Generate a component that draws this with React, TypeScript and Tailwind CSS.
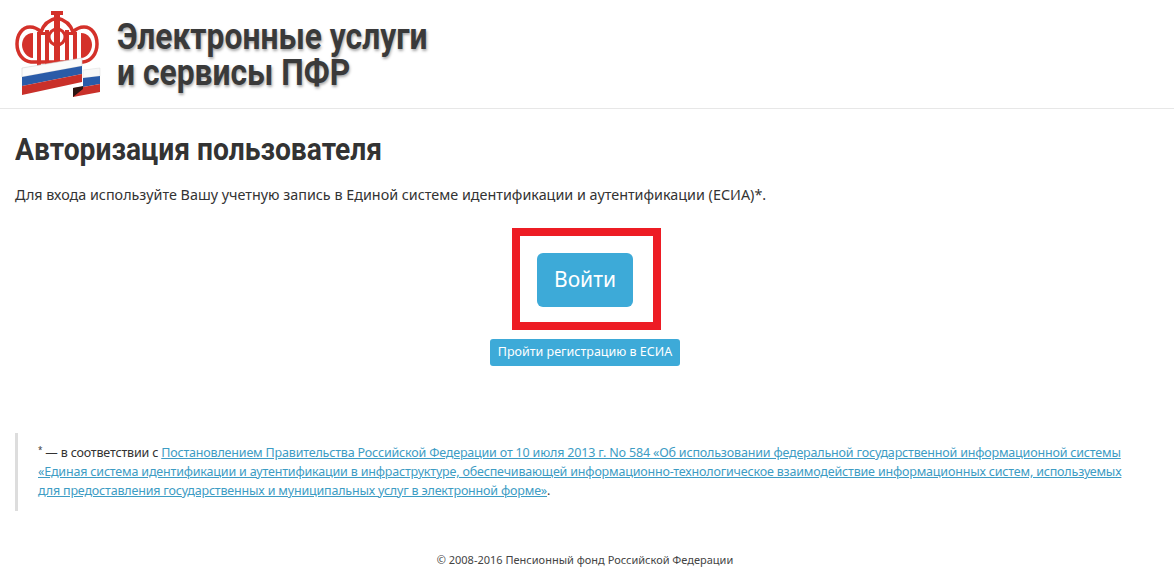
const Logo = () => (
  <svg width="86" height="88" viewBox="0 0 86 88" className="shrink-0">
    {/* dome */}
    <path
      d="M42 8C33 10 28 16 26 22 23 19 19 17 15 17 7 17 2 25 2 34 2 44 8 51 16 52H68C76 51 82 44 82 34 82 25 77 17 69 17 65 17 61 19 58 22 56 16 51 10 42 8Z"
      fill="#fff"
      stroke="#d4312a"
      strokeWidth="3.5"
    />
    <path d="M36 1h12v4h-3v6h-6V5h-3z" fill="#d4312a" />
    {/* lobes */}
    <path d="M18 23C11 23 7 29 7 35 7 41 12 48 18 48Z" fill="#d4312a" />
    <path d="M66 23C73 23 77 29 77 35 77 41 72 48 66 48Z" fill="#d4312a" />
    {/* letter strokes */}
    <path d="M22 22h4v38h-4zM30 20h4v38h-4zM50 20h4v36h-4zM58 22h4v34h-4zM39 11h6v45h-6z" fill="#d4312a" />
    <path d="M22 22h12v3H22zM50 22h12v3H50z" fill="#d4312a" />
    <circle cx="42" cy="27" r="8" fill="none" stroke="#d4312a" strokeWidth="3" />
    {/* small flag */}
    <path d="M68 60l17-2v8l-17 2z" fill="#f8f8f8" stroke="#ddd" strokeWidth=".5" />
    <path d="M68 68l17-2v8l-17 3z" fill="#2a5ba8" />
    <path d="M58 78l10-1 17-3v8l-27 5z" fill="#c9302a" />
    <path d="M58 78l10-2v3l-10 8z" fill="#2b1512" />
    {/* big flag */}
    <path d="M7 58l60-10v8L7 67z" fill="#fbfbfb" stroke="#d0d0d0" strokeWidth=".6" />
    <path d="M7 67l60-11v8L7 76z" fill="#2a5ba8" />
    <path d="M7 76l60-12v8L7 85z" fill="#c9302a" />
  </svg>
);

const App = () => {
  return (
    <div className="relative h-[570px] w-[1174px] overflow-hidden bg-white font-['Noto_Sans',sans-serif] text-[#333]">
      {/* header */}
      <div className="flex h-[109px] items-start gap-[16px] border-b border-[#e7e7e7] pl-[15px] pt-[10px]">
        <Logo />
        <div className="mt-[9px] font-['Roboto',sans-serif] text-[36px] font-bold leading-[36px] text-[#3a3a3a] [text-shadow:1px_2px_3px_#aaa]">
          <div className="w-[360px] origin-left scale-x-[0.883] whitespace-nowrap">Электронные услуги</div>
          <div className="w-[360px] origin-left scale-x-[0.883] whitespace-nowrap">и сервисы ПФР</div>
        </div>
      </div>

      <div className="px-[15px]">
        <h1 className="mt-[21px] origin-left scale-x-[0.91] whitespace-nowrap font-['Roboto',sans-serif] text-[31px] font-bold leading-[40px] text-[#333]">
          Авторизация пользователя
        </h1>
        <p className="mt-[15px] whitespace-nowrap text-[14.35px] leading-[20px]">
          Для входа используйте Вашу учетную запись в Единой системе идентификации и аутентификации (ЕСИА)*.
        </p>

        {/* login buttons */}
        <div className="mt-[23px] flex flex-col items-center pr-[4px]">
          <div className="ml-[3px] flex h-[102px] w-[149px] items-center justify-center border-[8px] border-[#ed1c24] pr-[3px] pt-[2px]">
            <button className="h-[54px] w-[96px] rounded-[6px] bg-[#3daad8] text-[21px] text-white">Войти</button>
          </div>
          <button className="mt-[9px] h-[27px] w-[190px] whitespace-nowrap rounded-[3px] bg-[#3daad8] text-[12.5px] text-white">
            Пройти регистрацию в ЕСИА
          </button>
        </div>

        {/* footnote */}
        <div className="mt-[67px] h-[78px] w-[1125px] border-l-[3px] border-[#ddd] pl-[20px] pt-[10px] text-[12.5px] leading-[19px] tracking-[-0.18px]">
          <p className="whitespace-nowrap">
            <sup className="text-[8px]">*</sup> — в соответствии с{" "}
            <a href="#" className="text-[#3d9cc4] underline">
              Постановлением Правительства Российской Федерации от 10 июля 2013 г. No 584 «Об использовании федеральной государственной информационной системы
            </a>
          </p>
          <p className="whitespace-nowrap">
            <a href="#" className="text-[#3d9cc4] underline">
              «Единая система идентификации и аутентификации в инфраструктуре, обеспечивающей информационно-технологическое взаимодействие информационных систем, используемых
            </a>
          </p>
          <p className="whitespace-nowrap">
            <a href="#" className="text-[#3d9cc4] underline">
              для предоставления государственных и муниципальных услуг в электронной форме»
            </a>
            .
          </p>
        </div>

        <p className="mt-[41px] pr-[4px] text-center text-[11px] leading-[16px] text-[#444]">
          © 2008-2016 Пенсионный фонд Российской Федерации
        </p>
      </div>
    </div>
  );
};

export default App;
